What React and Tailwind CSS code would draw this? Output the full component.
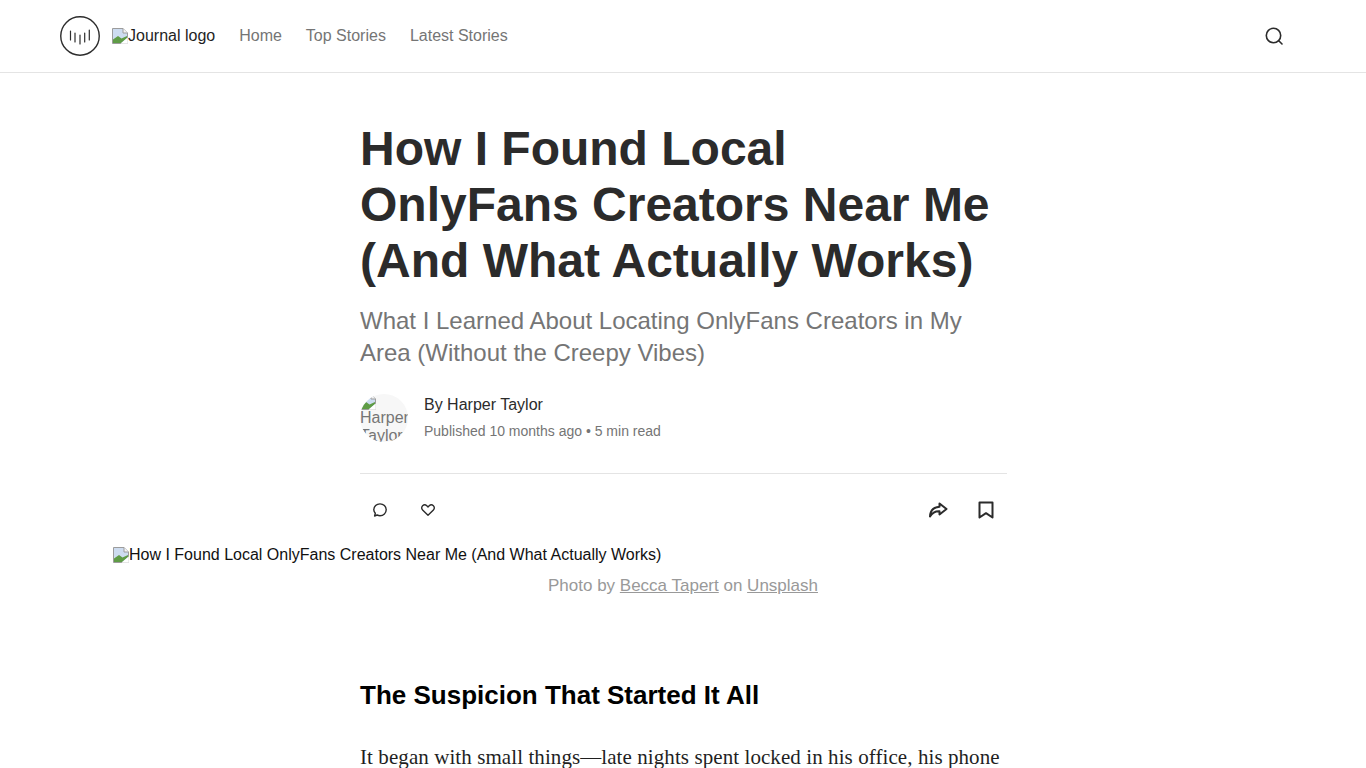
const sans = "font-['Liberation_Sans',Arial,sans-serif]";

function BrokenImage({ className = "" }) {
  return (
    <svg viewBox="0 0 16 16" width="16" height="16" className={`shrink-0 ${className}`} aria-hidden="true">
      <path d="M0.5 0.5H11L15.5 5V15.5H0.5Z" fill="#cddcf0" stroke="#9c9c9c" />
      <path d="M11 0.5V5H15.5" fill="#f4f4f4" stroke="#9c9c9c" />
      <path d="M1 15V11.5L6 8L9.5 10.5L15 8V10L9 15Z" fill="#5f9c46" />
      <path d="M8.5 15.8L15.8 9.5V15.8Z" fill="#fff" />
    </svg>
  );
}

function LogoMark() {
  return (
    <svg width="40" height="40" viewBox="0 0 40 40" fill="none" stroke="#2d2d2d" strokeLinecap="round" aria-hidden="true">
      <circle cx="20" cy="20" r="19.25" strokeWidth="1.4" />
      <path d="M10.5 15V24M15 17V26M20 19V28M24.7 17V26M29.3 14V24" strokeWidth="1.2" />
    </svg>
  );
}

export default function App() {
  return (
    <div className={`${sans} bg-white h-[768px] overflow-hidden`}>
      <header className="h-[73px] border-b border-[#e4e4e4] px-[60px] flex items-center">
        <LogoMark />
        <div className="ml-3 flex items-center text-[16px] text-[#1f1f1f]">
          <BrokenImage />
          <span>Journal logo</span>
        </div>
        <nav className="ml-6 flex items-center gap-6 text-[16px] text-[#757575]">
          <a>Home</a>
          <a>Top Stories</a>
          <a>Latest Stories</a>
        </nav>
        <div className="ml-auto mr-[22px]">
          <svg width="20" height="20" viewBox="0 0 20 20" fill="none" stroke="#2b2b2b" strokeWidth="1.6" strokeLinecap="round" aria-hidden="true">
            <circle cx="9.5" cy="9.5" r="7.2" />
            <path d="M15 15L18 18" />
          </svg>
        </div>
      </header>

      <main>
        <div className="w-[647px] ml-[360px] pt-[48px]">
          <h1 className="text-[48px] leading-[56px] font-bold text-[#2b2b2b]">
            How I Found Local OnlyFans Creators Near Me (And What Actually Works)
          </h1>
          <p className="mt-[16px] text-[24px] leading-[32px] text-[#757575]">
            What I Learned About Locating OnlyFans Creators in My Area (Without the Creepy Vibes)
          </p>

          <div className="mt-[25px] flex items-start">
            <div className="w-12 h-12 rounded-full bg-[#f7f7f7] overflow-hidden text-[16px] leading-[18px] text-[#757575] shrink-0">
              <BrokenImage className="block" />
              <div className="-mt-px">Harper Taylor</div>
            </div>
            <div className="ml-4">
              <div className="text-[16px] leading-[20px] text-[#2b2b2b] mt-[1px]">By Harper Taylor</div>
              <div className="mt-[7px] text-[14px] leading-[18px] text-[#757575]">
                Published 10 months ago • 5 min read
              </div>
            </div>
          </div>

          <div className="mt-[31px] border-t border-[#e4e4e4] h-[72px] flex items-center pl-[12px] pr-[11px]">
            <svg width="16" height="16" viewBox="0 0 16 16" fill="none" stroke="#2b2b2b" strokeWidth="1.4" strokeLinejoin="round" aria-hidden="true">
              <path d="M2.6 14L3.3 11.3C2.4 10.2 1.8 9.1 1.8 7.8C1.8 4.5 4.5 1.9 8 1.9C11.5 1.9 14.2 4.5 14.2 7.8C14.2 11.1 11.5 13.7 8 13.7C7 13.7 6 13.4 5.1 13Z" />
            </svg>
            <svg className="ml-8" width="16" height="16" viewBox="0 0 16 16" fill="none" stroke="#2b2b2b" strokeWidth="1.4" strokeLinejoin="round" aria-hidden="true">
              <path d="M8 13.2L2.6 8C1.4 6.8 1.4 4.9 2.6 3.8C3.8 2.7 5.6 2.7 6.8 3.8L8 5L9.2 3.8C10.4 2.7 12.2 2.7 13.4 3.8C14.6 4.9 14.6 6.8 13.4 8Z" />
            </svg>
            <svg className="ml-auto" width="20" height="20" viewBox="0 0 20 20" fill="none" stroke="#2b2b2b" strokeWidth="2" strokeLinejoin="round" aria-hidden="true">
              <path d="M11.5 3.5L18.5 9L11.5 14.5V11.2C7.5 11 4.5 12.2 2 16.5C2.2 11 5.5 7.2 11.5 6.8Z" />
            </svg>
            <svg className="ml-7" width="20" height="20" viewBox="0 0 20 20" fill="none" stroke="#2b2b2b" strokeWidth="2" strokeLinejoin="round" aria-hidden="true">
              <path d="M3.5 2.5H16.5V17.5L10 13.2L3.5 17.5Z" />
            </svg>
          </div>
        </div>

        <figure className="w-[1140px] mx-auto mt-[1px]">
          <div className="flex items-center text-[16px] leading-[18px] text-[#111]">
            <BrokenImage />
            <span>How I Found Local OnlyFans Creators Near Me (And What Actually Works)</span>
          </div>
          <figcaption className="mt-[10px] text-center text-[17px] leading-[24px] text-[#999]">
            Photo by <a className="underline">Becca Tapert</a> on <a className="underline">Unsplash</a>
          </figcaption>
        </figure>

        <article className="w-[647px] ml-[360px] mt-[81px]">
          <h2 className="text-[26px] leading-[32px] font-bold text-black">The Suspicion That Started It All</h2>
          <p className="mt-[30px] font-['Liberation_Serif',serif] text-[21px] tracking-[0.08px] leading-[32px] text-[#1f1f1f] whitespace-nowrap">
            It began with small things—late nights spent locked in his office, his phone
          </p>
        </article>
      </main>
    </div>
  );
}
